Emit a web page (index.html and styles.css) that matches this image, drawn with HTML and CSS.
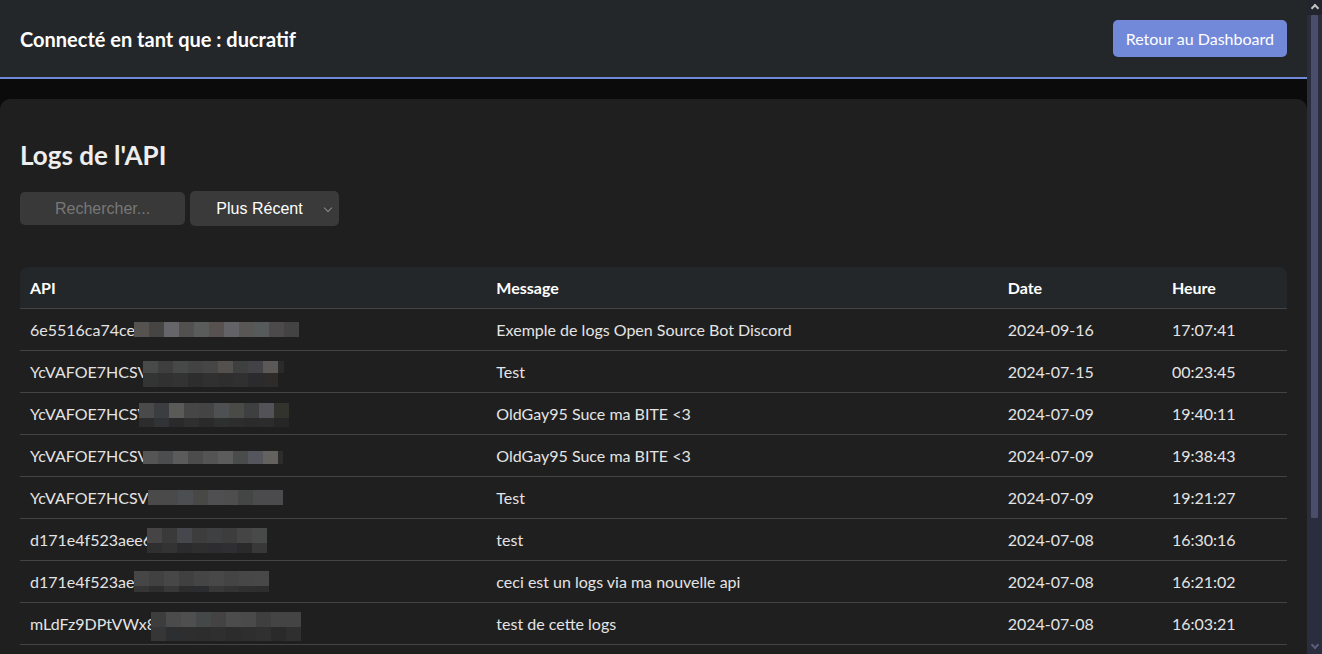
FILE: index.html
```html
<!DOCTYPE html>
<html lang="fr">
<head>
<meta charset="utf-8">
<title>Logs de l'API</title>
<link rel="stylesheet" href="styles.css">
</head>
<body>
<div class="app">
<header class="topbar">
  <h3 class="user">Connecté en tant que : ducratif</h3>
  <a class="back-btn" href="#">Retour au Dashboard</a>
</header>
<main class="panel">
  <h2 class="title">Logs de l'API</h2>
  <div class="controls">
    <input class="search" type="text" placeholder="Rechercher...">
    <span class="sort-wrap">
      <select class="sort">
        <option>Plus Récent</option>
        <option>Plus Ancien</option>
      </select>
    </span>
  </div>
  <table class="logs">
    <colgroup>
      <col class="c-api"><col class="c-msg"><col class="c-date"><col class="c-time">
    </colgroup>
    <thead>
      <tr><th>API</th><th>Message</th><th>Date</th><th>Heure</th></tr>
    </thead>
    <tbody>
      <tr><td><span class="key">6e5516ca74cef<span class="redact r1"></span></span></td><td>Exemple de logs Open Source Bot Discord</td><td>2024-09-16</td><td>17:07:41</td></tr>
      <tr><td><span class="key">YcVAFOE7HCSV<span class="redact r2"></span></span></td><td>Test</td><td>2024-07-15</td><td>00:23:45</td></tr>
      <tr><td><span class="key">YcVAFOE7HCSV<span class="redact r3"></span></span></td><td>OldGay95 Suce ma BITE &lt;3</td><td>2024-07-09</td><td>19:40:11</td></tr>
      <tr><td><span class="key">YcVAFOE7HCSV<span class="redact r4"></span></span></td><td>OldGay95 Suce ma BITE &lt;3</td><td>2024-07-09</td><td>19:38:43</td></tr>
      <tr><td><span class="key">YcVAFOE7HCSV<span class="redact r5"></span></span></td><td>Test</td><td>2024-07-09</td><td>19:21:27</td></tr>
      <tr><td><span class="key">d171e4f523aee6<span class="redact r6"></span></span></td><td>test</td><td>2024-07-08</td><td>16:30:16</td></tr>
      <tr><td><span class="key">d171e4f523ae<span class="redact r7"></span></span></td><td>ceci est un logs via ma nouvelle api</td><td>2024-07-08</td><td>16:21:02</td></tr>
      <tr><td><span class="key">mLdFz9DPtVWx8<span class="redact r8"></span></span></td><td>test de cette logs</td><td>2024-07-08</td><td>16:03:21</td></tr>
    </tbody>
  </table>
</main>
</div>
<div class="vscroll" aria-hidden="true">
  <span class="sb-btn sb-up"></span>
  <span class="sb-track"><span class="sb-thumb"></span></span>
  <span class="sb-btn sb-down"></span>
</div>
</body>
</html>
```
FILE: styles.css
```css
html, body {
  margin: 0;
  height: 100%;
  overflow: hidden;
}
body {
  display: flex;
  background: #0b0b0b;
  color: #e6e6e6;
  font-family: "Lato", "Noto Sans", sans-serif;
  font-size: 16px;
}
.app {
  flex: 1;
  min-width: 0;
  height: 100vh;
  overflow: hidden;
}
.vscroll {
  width: 15px;
  flex: none;
  display: flex;
  flex-direction: column;
  background: #2a2d3d;
}
.sb-btn {
  position: relative;
  height: 15px;
  flex: none;
}
.sb-up {
  background: #22252e;
}
.sb-btn::after {
  content: "";
  position: absolute;
  left: 5px;
  width: 4px;
  height: 4px;
  transform: rotate(45deg);
}
.sb-up::after {
  top: 5px;
  border-left: 2px solid #c2c2c2;
  border-top: 2px solid #c2c2c2;
}
.sb-down::after {
  top: 3px;
  border-right: 2px solid #5a5e76;
  border-bottom: 2px solid #5a5e76;
}
.sb-track {
  flex: 1;
  display: flex;
  flex-direction: column;
  padding: 0 4px;
}
.sb-thumb {
  height: 503px;
  background: #4b4e69;
  border-radius: 1px;
}
.topbar {
  display: flex;
  align-items: center;
  justify-content: space-between;
  padding: 20px;
  background: #23272a;
  border-bottom: 2px solid #7289da;
}
.user {
  margin: 0;
  font-size: 20px;
  font-weight: 700;
  color: #ffffff;
}
.back-btn {
  display: block;
  padding: 8px 13px;
  line-height: 21px;
  background: #7289da;
  color: #ffffff;
  text-decoration: none;
  border-radius: 5px;
  font-size: 16px;
}
.panel {
  margin-top: 20px;
  padding: 20px;
  background: #1f1f1f;
  border-radius: 10px;
  min-height: 692px;
  box-sizing: border-box;
}
.title {
  margin: 20px 0;
  font-size: 26px;
  line-height: 32px;
  font-weight: 700;
  color: #eeeeee;
}
.controls {
  display: flex;
  align-items: center;
  gap: 5px;
}
.search {
  width: 165px;
  height: 33px;
  box-sizing: border-box;
  border: none;
  border-radius: 5px;
  background: #393939;
  color: #dddddd;
  font-family: "Liberation Sans", Arial, sans-serif;
  font-size: 16px;
  text-align: center;
  outline: none;
}
.search::placeholder {
  color: #777777;
}
.sort-wrap {
  position: relative;
  display: block;
}
.sort-wrap::after {
  content: "";
  position: absolute;
  right: 8px;
  top: 14px;
  width: 5px;
  height: 5px;
  border-right: 1.5px solid #8a8a8a;
  border-bottom: 1.5px solid #8a8a8a;
  transform: rotate(45deg);
  pointer-events: none;
}
.sort {
  display: block;
  appearance: none;
  width: 149px;
  height: 35px;
  border: none;
  border-radius: 5px;
  background: #3a3a3a;
  color: #ffffff;
  font-family: "Liberation Sans", Arial, sans-serif;
  font-size: 16px;
  text-align: center;
  padding: 0 16px 0 6px;
}
.logs {
  margin-top: 41px;
  width: 100%;
  border-collapse: separate;
  border-spacing: 0;
  table-layout: fixed;
}
.c-api { width: 466px; }
.c-msg { width: 511px; }
.c-date { width: 164px; }
.c-time { width: 125px; }
.logs th,
.logs td {
  text-align: left;
  padding: 10px;
  line-height: 21px;
  border-bottom: 1px solid #444444;
  white-space: nowrap;
}
.logs th {
  background: #23272a;
  color: #ffffff;
  font-weight: 700;
}
.logs th:first-child { border-top-left-radius: 8px; }
.logs th:last-child { border-top-right-radius: 8px; }
.logs td {
  color: #e4e4e4;
}
.key {
  position: relative;
}
.redact {
  position: absolute;
  left: 100%;
  margin-left: -5px;
}
.r1 {
  top: 2px; width: 165px; height: 15px;
  margin-left: -6px;
  background: linear-gradient(90deg, #56524f 0 15px, #474543 15px 30px, #66666a 30px 45px, #535150 45px 60px, #5a5c5c 60px 75px, #57524f 75px 90px, #626267 90px 105px, #595755 105px 120px, #575a5a 120px 135px, #4c4a4a 135px 150px, #444343 150px 165px);
}
.r2 {
  top: -1px; width: 141px; height: 26px;
  background:
    linear-gradient(90deg, #484a4a 0 15px, #3e3e3e 15px 30px, #474848 30px 45px, #434343 45px 60px, #464646 60px 75px, #53504e 75px 90px, #3e3f3f 90px 105px, #424247 105px 120px, #5b5958 120px 135px, #2a2a2a 135px 141px) top / 100% 12px no-repeat,
    linear-gradient(90deg, #333535 0 15px, #313131 15px 30px, #333333 30px 45px, #2d2d2d 45px 60px, #303030 60px 75px, #2e2e2e 75px 90px, #303030 90px 105px, #2b2b2d 105px 120px, #2d2c2b 120px 135px, #1f1f1f 135px 141px) bottom / 100% 14px no-repeat;
}
.r3 {
  top: -1px; width: 150px; height: 24px;
  margin-left: -9px;
  background:
    linear-gradient(90deg, #4a4a4a 0 15px, #3c3d40 15px 30px, #5a5a58 30px 45px, #464646 45px 60px, #444444 60px 75px, #4f5052 75px 90px, #4a4a46 90px 105px, #3e3f41 105px 120px, #535258 120px 135px, #33332e 135px 150px) top / 100% 15px no-repeat,
    linear-gradient(90deg, #2c2c2c 0 15px, #323336 15px 30px, #2a2a2a 30px 45px, #2f2f2f 45px 60px, #2a2a2a 60px 75px, #2e2f2f 75px 90px, #2d2d2d 90px 105px, #2b2b2b 105px 120px, #2c2c2c 120px 135px, #262626 135px 150px) bottom / 100% 9px no-repeat;
}
.r4 {
  top: 5px; width: 140px; height: 13px;
  background: linear-gradient(90deg, #555555 0 15px, #4c4d4f 15px 30px, #5b5b5b 30px 45px, #4d4c4c 45px 60px, #545454 60px 75px, #5c5c5c 75px 90px, #4a4c4c 90px 105px, #55555d 105px 120px, #64625e 120px 135px, #2c2c2c 135px 140px);
}
.r5 {
  top: 2px; width: 135px; height: 15px;
  margin-left: 0;
  background: linear-gradient(90deg, #4a4a4a 0 30px, #4b4f52 30px 45px, #484846 45px 60px, #4f4f51 60px 75px, #4e4e4e 75px 90px, #444646 90px 105px, #4b4b4d 105px 135px);
}
.r6 {
  top: -2px; width: 120px; height: 25px;
  background:
    linear-gradient(90deg, #464444 0 15px, #3a3a3a 15px 30px, #44474c 30px 45px, #3d3d3d 45px 60px, #3f4042 60px 75px, #3e3d3d 75px 90px, #454545 90px 105px, #484a4a 105px 120px) top / 100% 15px no-repeat,
    linear-gradient(90deg, #2f2f2f 0 15px, #333333 15px 30px, #2b2b2d 30px 45px, #2e2e2e 45px 60px, #2d2d2f 60px 75px, #2f2f33 75px 90px, #2a2a2a 90px 105px, #383838 105px 120px) bottom / 100% 10px no-repeat;
}
.r7 {
  top: -1px; width: 135px; height: 21px;
  margin-left: 0;
  background:
    linear-gradient(90deg, #464646 0 15px, #414141 15px 30px, #474747 30px 45px, #404040 45px 60px, #454545 60px 75px, #484848 75px 90px, #444444 90px 105px, #474747 105px 120px, #484848 120px 135px) top / 100% 15px no-repeat,
    linear-gradient(90deg, #353535 0 15px, #2e2e2e 15px 30px, #383838 30px 45px, #2c2c2c 45px 60px, #2b2c2f 60px 75px, #383838 75px 90px, #333333 90px 105px, #2f2f2f 105px 120px, #2e2e2e 120px 135px) bottom / 100% 6px no-repeat;
}
.r8 {
  top: -2px; width: 150px; height: 29px;
  background:
    linear-gradient(90deg, #3d3d3d 0 15px, #4b4b4b 15px 30px, #4f4f4f 30px 45px, #454848 45px 60px, #444242 60px 75px, #4c4c4c 75px 90px, #4a4a4a 90px 105px, #3f3f3f 105px 120px, #444444 120px 135px, #444444 135px 150px) top / 100% 15px no-repeat,
    linear-gradient(90deg, #363636 0 15px, #2c2e30 15px 30px, #2e2e2e 30px 45px, #2d2d2d 45px 60px, #2f2f2f 60px 75px, #2c2c2c 75px 90px, #2e2e2e 90px 105px, #303030 105px 120px, #2a2a2a 120px 135px, #2f2f2f 135px 150px) bottom / 100% 14px no-repeat;
}
```
